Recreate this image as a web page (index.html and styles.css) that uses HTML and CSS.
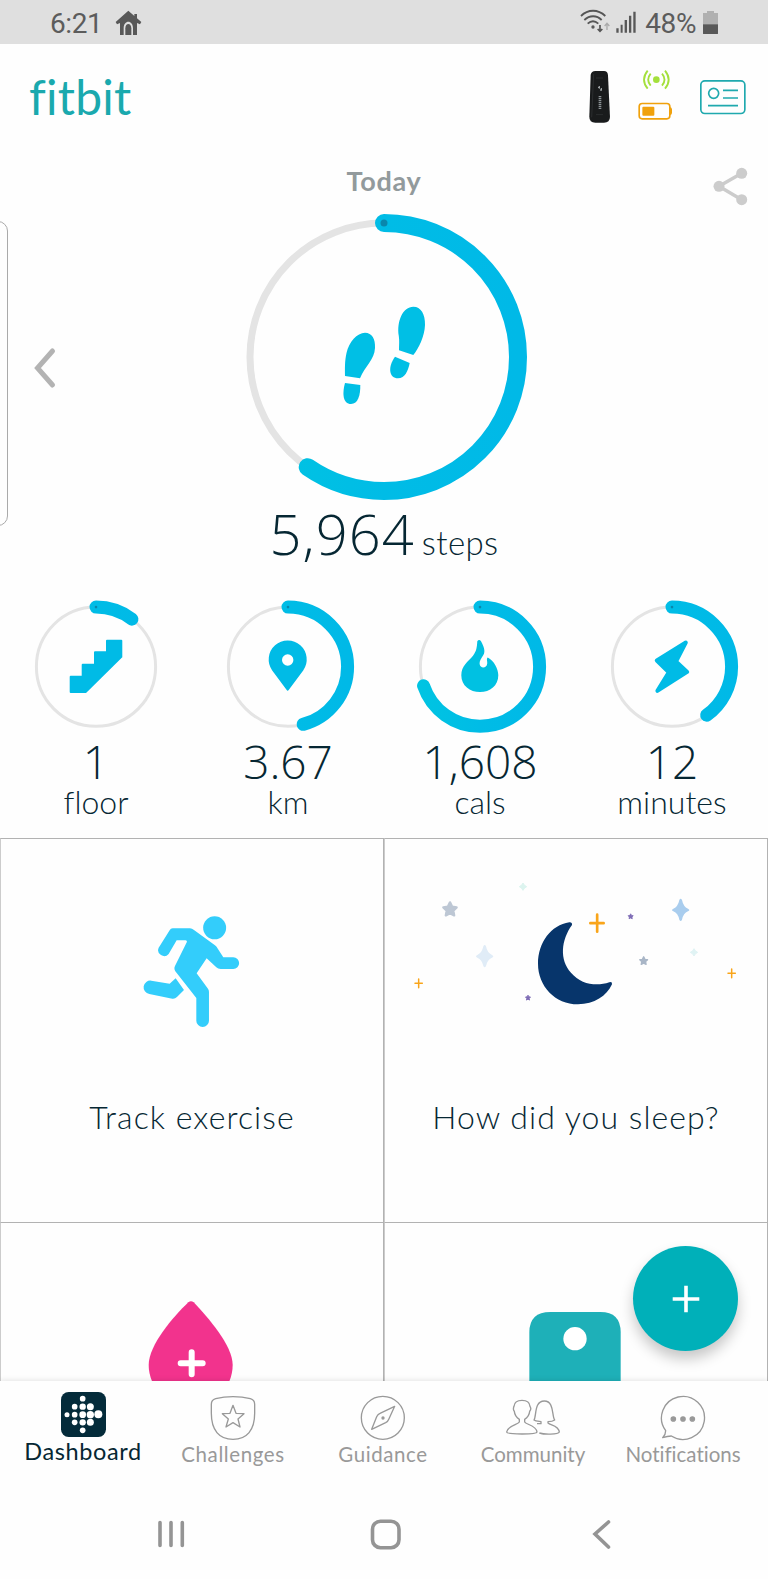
FILE: index.html
```html
<!DOCTYPE html>
<html lang="en">
<head>
  <meta charset="UTF-8"/>
  <meta name="viewport" content="width=device-width, initial-scale=1"/>
  <title>fitbit - Today</title>
  <link rel="stylesheet" href="styles.css">
</head>
<body>
<div class="phone">
  <div class="status">
    <span class="clock">6:21</span>
    <svg class="status-home" viewBox="345 27 81 78"><path d="M385 29L403 45V39H411V52L424 63L420 70L411 66V102H399V82C399 56 371 56 371 82V102H360V66L351 70L347 63Z"/><path d="M376 102V82C376 65 394 65 394 82V102Z"/></svg>
    <svg class="status-signal" viewBox="588 24 172 80">
      <g fill="none" stroke="#555" stroke-width="5.5">
        <path d="M591 48C612 27 642 27 664 48"/>
        <path d="M601 60C617 45 638 45 653 60"/>
        <path d="M611 71C621 62 633 62 643 71"/>
        <path d="M648 75V93M641 87L648 94L655 87" stroke-width="5"/>
        <path d="M669 90V71M662 78L669 70L676 78" stroke="#aaa" stroke-width="4"/>
      </g>
      <circle cx="627" cy="81" r="5"/>
      <path d="M697 85H704V98H697ZM710 74H716V98H710ZM722 60H729V98H722ZM735 47H742V98H735ZM748 35H755V98H748Z"/>
    </svg>
    <span class="percent">48%</span>
    <svg class="status-battery" viewBox="957 32 45 70"><path fill="#b0b0b0" d="M969 32H990V38H1002V72H957V38H969Z"/><path d="M957 72H1002V99Q1002 102 999 102H960Q957 102 957 99Z"/></svg>
  </div>

  <div class="topbar">
    <div class="logo">fitbit</div>
    <svg class="tracker" viewBox="612 210 70 162">
      <path fill="#191b1c" d="M620 225Q622 213 634 213H660Q671 213 672 225L678 350Q678 368 660 368H634Q616 368 616 350Z"/>
      <path fill="none" stroke="#333738" stroke-width="2" d="M629 222L623 352M636 234H657M636 344H657"/>
      <path fill="none" stroke="#b5babd" stroke-width="3" d="M646 258V266M652 264V272M642 262H646M648 270H652"/>
      <path fill="none" stroke="#8d9396" stroke-width="8" stroke-dasharray="3 2 5 2" d="M648 288V328"/>
    </svg>
    <svg class="sync" viewBox="758 208 110 157">
      <g fill="none" stroke="#a4e03c" stroke-width="5.5">
        <path d="M790 213Q768 240 790 267M799 222Q784 240 799 258M833 222Q848 240 833 258M842 213Q864 240 842 267"/>
      </g>
      <circle cx="816" cy="240" r="10" fill="#a4e03c"/>
      <rect x="764.500" y="311.500" width="92" height="46" rx="9" fill="none" stroke="#f0a10c" stroke-width="5"/>
      <path fill="#f0a10c" d="M856 322Q863 323 863 329V340Q863 346 856 347ZM777 321H807Q810 321 810 324V345Q810 348 807 348H777Q774 348 774 345V324Q774 321 777 321Z"/>
    </svg>
    <svg class="card" viewBox="945 235 144 108">
      <g fill="none" stroke="#1fa9ae" stroke-width="5">
        <rect x="950.500" y="240.500" width="132" height="98" rx="12"/>
        <circle cx="989" cy="278" r="15"/>
        <path d="M1017 269H1062M1017 292H1062M972 315H1062"/>
      </g>
    </svg>
  </div>

  <div class="today">
    <div class="edge-panel"></div>
    <svg class="prev" viewBox="0 0 24 44"><path d="M18.500 5L3.500 22L18.500 39"/></svg>
    <svg class="share" viewBox="0 0 36 40"><path d="M28.700 7.300L6 20.300L28.700 33.700"/><circle cx="28.700" cy="7.300" r="5.500"/><circle cx="6" cy="20.300" r="5.500"/><circle cx="28.700" cy="33.700" r="5.500"/></svg>

    <h1>Today</h1>
    <svg class="ring-big" viewBox="240 213 288 288">
      <defs>
        <linearGradient id="blue" x1="0" x2="1" y1="0" y2="0"><stop offset="0" stop-color="#00c4e2"/><stop offset=".5" stop-color="#00bce6"/><stop offset="1" stop-color="#00b9e7"/></linearGradient>
      </defs>
      <circle class="track" cx="384" cy="357" r="134"/>
      <path class="arc" pathLength="100" stroke-dasharray="59.640 100" d="M384 223A134 134 0 0 1 384 491A134 134 0 0 1 384 223"/>
      <circle cx="384" cy="223" r="3.500" fill="#0a87ac"/>
      <g fill="#00bfe5">
        <path d="M365 332.700C372 332.700 375.500 339 375 348C374.500 360 365 366 360 378.300L345 376C345 368 344.600 362 346.500 353C349 342 357 332.700 365 332.700Z"/>
        <path d="M345 383L360.300 385C360.500 395 358 404 351 404C343 404 342 394 345 383Z"/>
        <path d="M413.300 306.700C421 306.700 425.200 314 425 325C424.700 336 418.500 349 413.300 355L399 350.300C399 345 399.500 341 398.800 336C396.500 321 403 306.700 413.300 306.700Z"/>
        <path d="M395 356.700L409.700 363C408 371 405 378.300 398 378.300C389 378.300 387.500 367 395 356.700Z"/>
      </g>
    </svg>
    <div class="steps"><span class="steps-num">5,964</span><span class="steps-unit">steps</span></div>

    <div class="stats">
      <div class="stat">
        <svg class="ring" viewBox="-67 -66.700 134 134">
          <circle class="track" r="59.600"/>
          <path class="arc" pathLength="100" stroke-dasharray="10.300 100" d="M0 -59.600A59.600 59.600 0 0 1 0 59.600A59.600 59.600 0 0 1 0 -59.600"/>
          <circle class="dot" cy="-59.600" r="1.300"/>
          <path class="icon" stroke-width="2" d="M11 -26H25.300V-9.800L-10.400 25.300H-25.300V10H-13.300V-2H-1V-14.400H11Z"/>
        </svg>
        <div class="value">1</div>
        <div class="unit">floor</div>
      </div>
      <div class="stat">
        <svg class="ring" viewBox="-67 -66.700 134 134">
          <circle class="track" r="59.600"/>
          <path class="arc" pathLength="100" stroke-dasharray="45.900 100" d="M0 -59.600A59.600 59.600 0 0 1 0 59.600A59.600 59.600 0 0 1 0 -59.600"/>
          <circle class="dot" cy="-59.600" r="1.300"/>
          <path class="icon" stroke-width="2" d="M-.300 23L-15 3.200A18 18 0 1 1 14.400 3.200Z"/>
          <circle cx="-.300" cy="-6.700" r="5.700" fill="#fff"/>
        </svg>
        <div class="value">3.67</div>
        <div class="unit">km</div>
      </div>
      <div class="stat">
        <svg class="ring" viewBox="-67 -66.700 134 134">
          <circle class="track" r="59.600"/>
          <path class="arc" pathLength="100" stroke-dasharray="69.800 100" d="M0 -59.600A59.600 59.600 0 0 1 0 59.600A59.600 59.600 0 0 1 0 -59.600"/>
          <circle class="dot" cy="-59.600" r="1.300"/>
          <path fill="#00c1e2" d="M-2.700 -25.500C-1.500 -27.500 0 -27 1 -25.500C4 -20 5.500 -15.500 3.500 -12C1 -8 -.600 -6 -.400 -3C0 2 6.500 2 7.200 -3C7.700 -5.500 6 -8 7.800 -9.300C14 -6 18.300 2 18.300 8.500C18.300 19 10 25.300 0 25.300C-10 25.300 -18.700 19 -18.700 8.500C-18.700 -1 -12 -5 -7 -11C-3.500 -15.500 -3 -20 -2.700 -25.500Z"/>
        </svg>
        <div class="value">1,608</div>
        <div class="unit">cals</div>
      </div>
      <div class="stat">
        <svg class="ring" viewBox="-67 -66.700 134 134">
          <circle class="track" r="59.600"/>
          <path class="arc" pathLength="100" stroke-dasharray="40.100 100" d="M0 -59.600A59.600 59.600 0 0 1 0 59.600A59.600 59.600 0 0 1 0 -59.600"/>
          <circle class="dot" cy="-59.600" r="1.300"/>
          <path class="icon" stroke-width="4" d="M13.800 -24.200L4 -5.200L15.200 5.200L-14.600 24.200L-3.200 5.600L-15.200 -6.200Z"/>
        </svg>
        <div class="value">12</div>
        <div class="unit">minutes</div>
      </div>
    </div>
  </div>

  <div class="tiles">
    <div class="tile">
      <div class="art art-run">
        <svg width="103.300" height="123.300" viewBox="420 210 310 370" fill="#33cdfb">
          <circle cx="644" cy="263.500" r="34.500"/>
          <path d="M518 265H570Q576 265 582 270L645 316Q650 320 654 327L670 352H700A17.500 17.500 0 0 1 700 387H662Q654 387 649 382L620 355L590 400L624 446Q627 450 627 456V542A19 19 0 0 1 589 542V474L526 394Q521 386 525 378L561 305Q560 301 556 301H530L506 342A18 18 0 0 1 476 323L509 271Q512 265 518 265Z"/>
          <path d="M527 415L552 450L531 471Q525 477 517 476L448 462A20 20 0 0 1 454 422L509 431Z"/>
        </svg>
      </div>
      <p>Track exercise</p>
    </div>
    <div class="tile">
      <div class="art art-sleep">
        <svg width="330" height="126.700" viewBox="80 120 990 380">
          <path fill="#07356b" d="M555 247Q564 246 563 255C530 300 525 360 560 398C590 433 635 440 675 427Q684 424 683 433C667 468 630 493 581 493C512 493 461 438 461 371C461 308 500 255 555 247Z"/>
          <g fill="none" stroke-linecap="round">
            <path stroke="#f9a51a" stroke-width="8" d="M638.500 224V275M618 249.500H658"/>
            <path stroke="#f9a51a" stroke-width="4.500" d="M103 417V443M92 430H114M1042 387V413M1031 400H1053"/>
          </g>
          <defs><path id="star" stroke-linejoin="round" d="M0 -20L6.500 -7L20 -5L10 5L12.500 19L0 12.500L-12.500 19L-10 5L-20 -5L-6.500 -7Z"/></defs>
          <use href="#star" transform="translate(197 207)" fill="#bdc7d4" stroke="#bdc7d4" stroke-width="7"/>
          <use href="#star" transform="translate(778 362) scale(.580)" fill="#a9b6c7" stroke="#a9b6c7" stroke-width="7"/>
          <use href="#star" transform="translate(739 229) scale(.380)" fill="#7e6cb5" stroke="#7e6cb5" stroke-width="7"/>
          <use href="#star" transform="translate(431 473) scale(.380)" fill="#7e6cb5" stroke="#7e6cb5" stroke-width="7"/>
          <path fill="#a9cdee" d="M885 180Q889 172 893 180Q897 200 911 206Q919 210 911 214Q897 220 893 239Q889 247 885 239Q881 220 867 214Q859 210 867 206Q881 200 885 180Z"/>
          <path fill="#e0ecf7" d="M297 319Q301 311 305 319Q309 339 323 345Q331 349 323 353Q309 359 305 378Q301 386 297 378Q293 359 279 353Q271 349 279 345Q293 339 297 319Z"/>
          <path fill="#dcf4ef" d="M416 129Q419 137 427 140Q419 143 416 151Q413 143 405 140Q413 137 416 129Z" stroke="#dcf4ef" stroke-width="3"/>
          <path fill="#e0f3f4" d="M929 326Q932 334 940 337Q932 340 929 348Q926 340 918 337Q926 334 929 326Z" stroke="#e0f3f4" stroke-width="3"/>
        </svg>
      </div>
      <p>How did you sleep?</p>
    </div>
    <div class="tile">
      <div class="art art-drop">
        <svg width="96.700" height="100" viewBox="430 290 290 300">
          <path fill="#f2338d" d="M566 306Q574 300 582 306C625 352 699 435 699 494C699 560 645 620 573 620C502 620 447 560 447 494C447 435 520 350 566 306Z"/>
          <path fill="none" stroke="#fff" stroke-width="18" stroke-linecap="round" d="M576 456V522M543 489H609"/>
        </svg>
      </div>
    </div>
    <div class="tile">
      <div class="art art-scale">
        <svg width="96.700" height="100" viewBox="430 320 290 300">
          <path fill="#1eb0b8" d="M437 396Q437 335 500 335H650Q711 335 711 396V640H437Z"/>
          <circle cx="574" cy="415" r="35" fill="#fff"/>
        </svg>
      </div>
    </div>
    <button class="fab"><svg width="28" height="28" viewBox="0 0 28 28"><path d="M14 .700V27.300M.700 14H27.300"/></svg></button>
  </div>

  <div class="tabs">
    <div class="tab active">
      <svg width="45" height="45" viewBox="183 576 135 135">
        <rect x="183" y="576" width="135" height="135" rx="23" fill="#042b3a"/>
        <g fill="#fff">
          <circle cx="248" cy="596" r="8.500"/>
          <circle cx="224" cy="620" r="8.500"/><circle cx="248" cy="620" r="9.500"/><circle cx="271" cy="620" r="10.500"/>
          <circle cx="201" cy="644" r="7.500"/><circle cx="224" cy="644" r="8.500"/><circle cx="248" cy="644" r="10"/><circle cx="271" cy="644" r="11"/><circle cx="295" cy="643" r="12"/>
          <circle cx="224" cy="667" r="8.500"/><circle cx="248" cy="667" r="9.500"/><circle cx="271" cy="667" r="10.500"/>
          <circle cx="248" cy="691" r="8.500"/>
        </g>
      </svg>
      <span>Dashboard</span>
    </div>
    <div class="tab">
      <svg width="54" height="46" viewBox="617 585 162 138">
        <path d="M698 590C720 590 738 593 750 596Q763 600 763 613V640C763 690 740 718 698 718C656 718 633 690 633 640V613Q633 600 646 596C658 593 676 590 698 590Z"/>
        <path d="M698 616L707 640L731 641L713 657L719 681L698 668L677 681L684 657L666 641L689 640Z"/>
      </svg>
      <span class="wide">Challenges</span>
    </div>
    <div class="tab">
      <svg width="54" height="46" viewBox="-84 585 162 138">
        <circle cx="-3.500" cy="653.500" r="64.500"/>
        <path d="M-37 688L-22 650Q-19 643 -12 640L32 619L15 656Q12 664 5 668Z"/>
        <circle class="solid" cx="-3" cy="654" r="3"/>
      </svg>
      <span class="wide">Guidance</span>
    </div>
    <div class="tab">
      <svg width="58" height="46" viewBox="360 585 174 138">
        <path d="M406 658C397 652 392 645 391 634C387 630 388 624 390 619C391 606 400 601 414 601C428 601 437 606 438 619C441 624 441 630 437 634C436 645 431 652 422 658V666C426 674 457 676 459 696C459 700 440 702 414 702C388 702 368 700 368 696C371 676 402 674 406 666Z"/>
        <path d="M459 671H471V665C465 664 455 664 450 660C458 648 450 603 481 603C511 603 503 648 512 660C507 664 500 665 492 665V669C500 676 524 676 526 696C522 704 480 704 466 699"/>
      </svg>
      <span>Community</span>
    </div>
    <div class="tab">
      <svg width="54" height="46" viewBox="816 585 162 138">
        <path d="M845 692A64.500 64.500 0 1 1 862 708Q850 708 836 713Q845 704 845 692Z"/>
        <g class="solid"><circle cx="868" cy="657" r="6.500"/><circle cx="897" cy="657" r="6.500"/><circle cx="925" cy="657" r="6.500"/></g>
      </svg>
      <span>Notifications</span>
    </div>
  </div>

  <div class="sysnav">
    <svg viewBox="0 0 32 32"><path d="M5 4.500V27.500M16 4.500V27.500M27.300 4.500V27.500"/></svg>
    <svg viewBox="0 0 32 32"><rect x="2.500" y="3.200" width="26.500" height="26.500" rx="8"/></svg>
    <svg viewBox="0 0 32 32"><path d="M23.500 4L10 16L23.500 29"/></svg>
  </div>
</div>
</body>
</html>
```
FILE: styles.css
```css
:root { --ink:#062733; --grey:#999; --line:#b2b2b2; --teal:#00b0b9; }
*{box-sizing:border-box;margin:0;padding:0;}
body{font-family:Lato, "Open Sans", sans-serif;font-weight:300;font-variant-ligatures:none;background:#fefefe;color:var(--ink);}
svg{display:block;flex:none;}
.phone{width:768px;height:1579px;margin:auto;display:flex;flex-direction:column;overflow:hidden;}

.status{height:44px;padding:2px 50px 0;background:#dfdfdf;display:flex;align-items:center;font:400 28px/44px Roboto, sans-serif;color:#5c5c5c;fill:#585858;}
.clock,.percent{padding-top:2px;letter-spacing:-.4px;}
.status-home{width:27px;height:26px;margin-left:13px;margin-top:-1px;}
.status-signal{width:57.3px;height:26.7px;margin:-3px 0 0 auto;}
.percent{margin-left:8px;}
.status-battery{width:15px;height:23.3px;margin-left:7px;margin-top:-1px;}

.topbar{height:106px;padding:0 21px 0 29px;display:flex;align-items:center;}
.logo{flex:1;font-size:48px;font-weight:400;line-height:60px;letter-spacing:.2px;color:#1aa9ae;}
.tracker{width:23.3px;height:54px;}
.sync{width:36.7px;height:52.3px;margin-left:25.3px;margin-top:-4px;}
.card{width:48px;height:36px;margin-left:25.7px;margin-top:-1px;}

.today{position:relative;height:688px;padding-top:10px;}
.today h1{font-size:27px;font-weight:700;line-height:42px;height:40px;letter-spacing:.7px;text-align:center;color:#929a9c;}
.edge-panel{position:absolute;left:-12px;top:71px;width:20px;height:305px;border:1px solid #aaa;border-radius:10px;}
.prev{position:absolute;left:34px;top:196px;width:24px;height:44px;fill:none;stroke:#b3b3b3;stroke-width:5;stroke-linecap:round;}
.share{position:absolute;left:713px;top:16px;width:36px;height:40px;fill:#ccc;}
.share path{fill:none;stroke:#ccc;stroke-width:3.5;}
.ring-big{width:288px;height:288px;margin:13px auto 0;}
.track{fill:none;stroke:#e4e4e4;stroke-width:3;}
.arc{fill:none;stroke:url(#blue);stroke-width:13;stroke-linecap:round;}
.ring-big .track{stroke-width:7;}
.ring-big .arc{stroke-width:18;}
.dot{fill:#0a87ac;}
.icon{fill:#00bbe6;stroke:#00bbe6;stroke-linejoin:round;}
.steps{height:63px;line-height:65px;text-align:center;}
.steps-num,.value{font-family:"Open Sans", Lato, sans-serif;}
.steps-num{font-size:56px;letter-spacing:1.1px;}
.steps-unit{font-size:33px;letter-spacing:.4px;margin-left:7px;}
.stats{display:flex;margin-top:36px;}
.stat{flex:1;text-align:center;}
.ring{width:134px;height:134px;margin:auto;}
.value{font-size:46px;line-height:54px;height:52px;}
.unit{font-size:32px;line-height:32px;}

.tiles{position:relative;height:543px;display:grid;grid-template-columns:1fr 1fr;grid-template-rows:384px 384px;overflow:hidden;}
.tile{border-top:1px solid var(--line);border-right:1px solid var(--line);border-left:1px solid #ccc;text-align:center;}
.tile p{font-size:32px;line-height:46px;letter-spacing:1.05px;}
.art{height:255px;padding-right:1px;display:flex;justify-content:center;}
.art-run{padding-top:71px;}
.art-sleep{padding-top:41px;}
.art-drop{padding-top:74px;}
.art-scale{padding-top:84px;}
.fab{position:absolute;left:633px;top:408px;width:105px;height:105px;border:none;border-radius:50%;background:var(--teal);box-shadow:0 8px 14px rgba(0,0,0,.22);display:flex;align-items:center;justify-content:center;}
.fab path{stroke:#fff;stroke-width:3.6;}

.tabs{position:relative;height:107px;padding:0 10px 0 8px;display:flex;background:#fefefe;box-shadow:0 -1px 5px rgba(0,0,0,.1);}
.tab{flex:1;padding-top:14px;display:flex;flex-direction:column;align-items:center;font-size:20.5px;font-weight:400;line-height:27px;color:var(--grey);fill:none;stroke:var(--grey);stroke-width:4;stroke-linejoin:round;}
.tab span{stroke:none;}
.tab .wide{letter-spacing:.6px;}
.tab .solid{fill:var(--grey);}
.tab.active{padding-top:11px;font-size:23.5px;line-height:28px;letter-spacing:.6px;color:var(--ink);stroke:none;}
.sysnav{height:91px;padding:0 61px 0 63px;display:flex;background:#fefefe;position:relative;}
.sysnav svg{width:32px;height:32px;margin:30px 91.5px 0;fill:none;stroke:#949494;stroke-width:3.6;stroke-linecap:round;}
```
